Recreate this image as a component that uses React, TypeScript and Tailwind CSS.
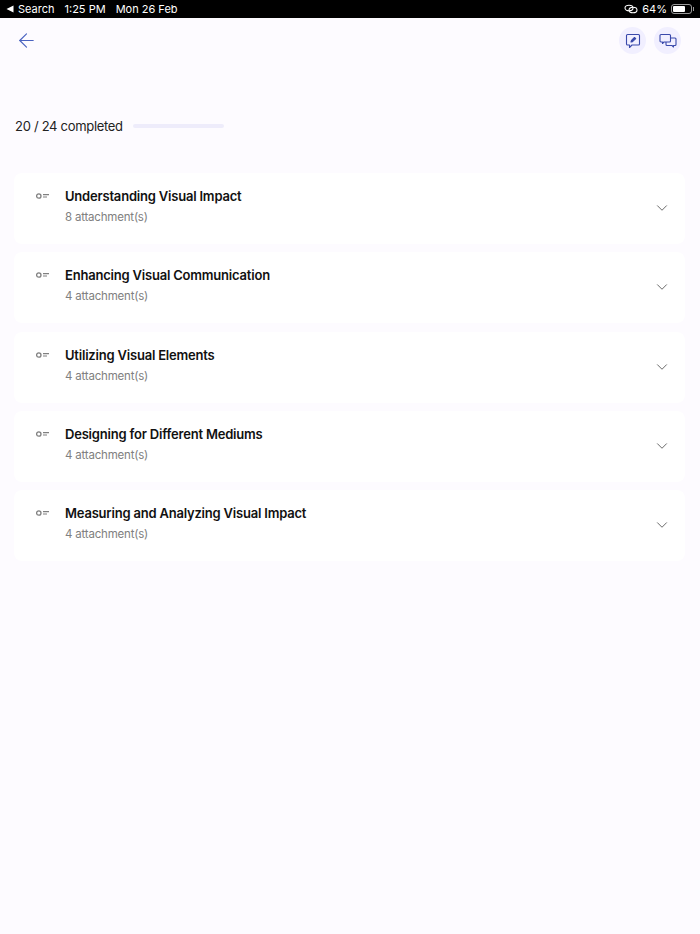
import React from 'react';
import { ArrowLeft, ChevronDown } from 'lucide-react';

const topics = [
  { title: 'Understanding Visual Impact', count: 8 },
  { title: 'Enhancing Visual Communication', count: 4 },
  { title: 'Utilizing Visual Elements', count: 4 },
  { title: 'Designing for Different Mediums', count: 4 },
  { title: 'Measuring and Analyzing Visual Impact', count: 4 },
];

const StatusBar = () => (
  <div className="h-[18px] bg-black text-white flex items-center justify-between pl-[6px] pr-[6px] text-[11px] font-['Inter',sans-serif]">
    <div className="flex items-center">
      <svg width="8" height="8" viewBox="0 0 8 8" className="mr-[4px]">
        <path d="M0.5 4 L7.5 0.5 V7.5 Z" fill="white" />
      </svg>
      <span>Search</span>
      <span className="ml-[10px]">1:25 PM</span>
      <span className="ml-[10px]">Mon 26 Feb</span>
    </div>
    <div className="flex items-center">
      <svg width="14" height="10" viewBox="0 0 14 10" fill="none" stroke="white" strokeWidth="1.1">
        <ellipse cx="5" cy="4" rx="4" ry="2.8" />
        <ellipse cx="9" cy="6" rx="4" ry="2.8" />
      </svg>
      <span className="ml-[4px]">64%</span>
      <div className="ml-[4px] w-[21px] h-[10px] border border-white/60 rounded-[3px] p-[1px] flex">
        <div className="w-[12px] bg-white rounded-[1px]" />
      </div>
      <div className="w-[1px] h-[4px] bg-white/60 ml-[1px]" />
    </div>
  </div>
);

const Header = () => (
  <div className="flex items-center justify-between pl-[15px] pr-[19px] pt-[9px]">
    <ArrowLeft size={23} strokeWidth={1.2} className="text-[#4a63c0]" />
    <div className="flex items-center gap-[8px]">
      <button className="w-[27px] h-[27px] rounded-full bg-[#f1efff] flex items-center justify-center">
        <svg width="16" height="16" viewBox="0 0 16 16" fill="none" stroke="#3949ab" strokeWidth="1.1" strokeLinejoin="round">
          <path d="M2.5 1.5 H13.5 A1 1 0 0 1 14.5 2.5 V11 A1 1 0 0 1 13.5 12 H7 L4.5 14.5 V12 H2.5 A1 1 0 0 1 1.5 11 V2.5 A1 1 0 0 1 2.5 1.5 Z" />
          <path d="M6 9 L6.5 7.5 L9.5 4.5 L10.7 5.7 L7.5 8.6 Z" fill="#3949ab" />
        </svg>
      </button>
      <button className="w-[27px] h-[27px] rounded-full bg-[#f1efff] flex items-center justify-center">
        <svg width="18" height="16" viewBox="0 0 18 16" fill="none" stroke="#3949ab" strokeWidth="1.1" strokeLinejoin="round">
          <path d="M2 1.5 H10.5 A1 1 0 0 1 11.5 2.5 V8 A1 1 0 0 1 10.5 9 H5 L3.5 10.5 V9 H2 A1 1 0 0 1 1 8 V2.5 A1 1 0 0 1 2 1.5 Z" />
          <path d="M11.5 5 H16 A1 1 0 0 1 17 6 V11.5 A1 1 0 0 1 16 12.5 H14.5 V14 L13 12.5 H8 A1 1 0 0 1 7 11.5 V9" />
        </svg>
      </button>
    </div>
  </div>
);

const TopicCard = ({ title, count }: { title: string; count: number }) => (
  <div className="h-[71px] bg-white rounded-[8px] flex items-center pl-[22px] pr-[14px]">
    <svg width="13" height="6" viewBox="0 0 13 6" fill="none" stroke="#808080" className="self-start mt-[20px]">
      <circle cx="2.8" cy="3" r="2.2" strokeWidth="1.3" />
      <path d="M7 1.6 H13 M7 4 H11" strokeWidth="1.1" />
    </svg>
    <div className="ml-[16px] flex-1 self-start pt-[13px]">
      <div className="text-[13px] leading-[20px] font-semibold text-[#111] tracking-[-0.2px]">{title}</div>
      <div className="mt-[1px] text-[11.5px] leading-[20px] text-[#808080] tracking-[-0.2px]">{count} attachment(s)</div>
    </div>
    <ChevronDown size={18} strokeWidth={1.3} className="text-[#666] -mt-[1px]" />
  </div>
);

export default function App() {
  return (
    <div className="min-h-[934px] bg-[#fdfbff] font-['Inter',sans-serif]">
      <StatusBar />
      <Header />
      <div className="pl-[15px] pr-[15px] mt-[62px] flex items-center">
        <span className="text-[13px] leading-[20px] text-[#222] tracking-[-0.3px]">20 / 24 completed</span>
        <div className="ml-[10px] w-[91px] h-[4px] rounded-full bg-[#eeecfb]" />
      </div>
      <div className="mt-[37px] ml-[14px] mr-[15px] flex flex-col gap-[8.3px]">
        {topics.map((t) => (
          <TopicCard key={t.title} title={t.title} count={t.count} />
        ))}
      </div>
    </div>
  );
}
